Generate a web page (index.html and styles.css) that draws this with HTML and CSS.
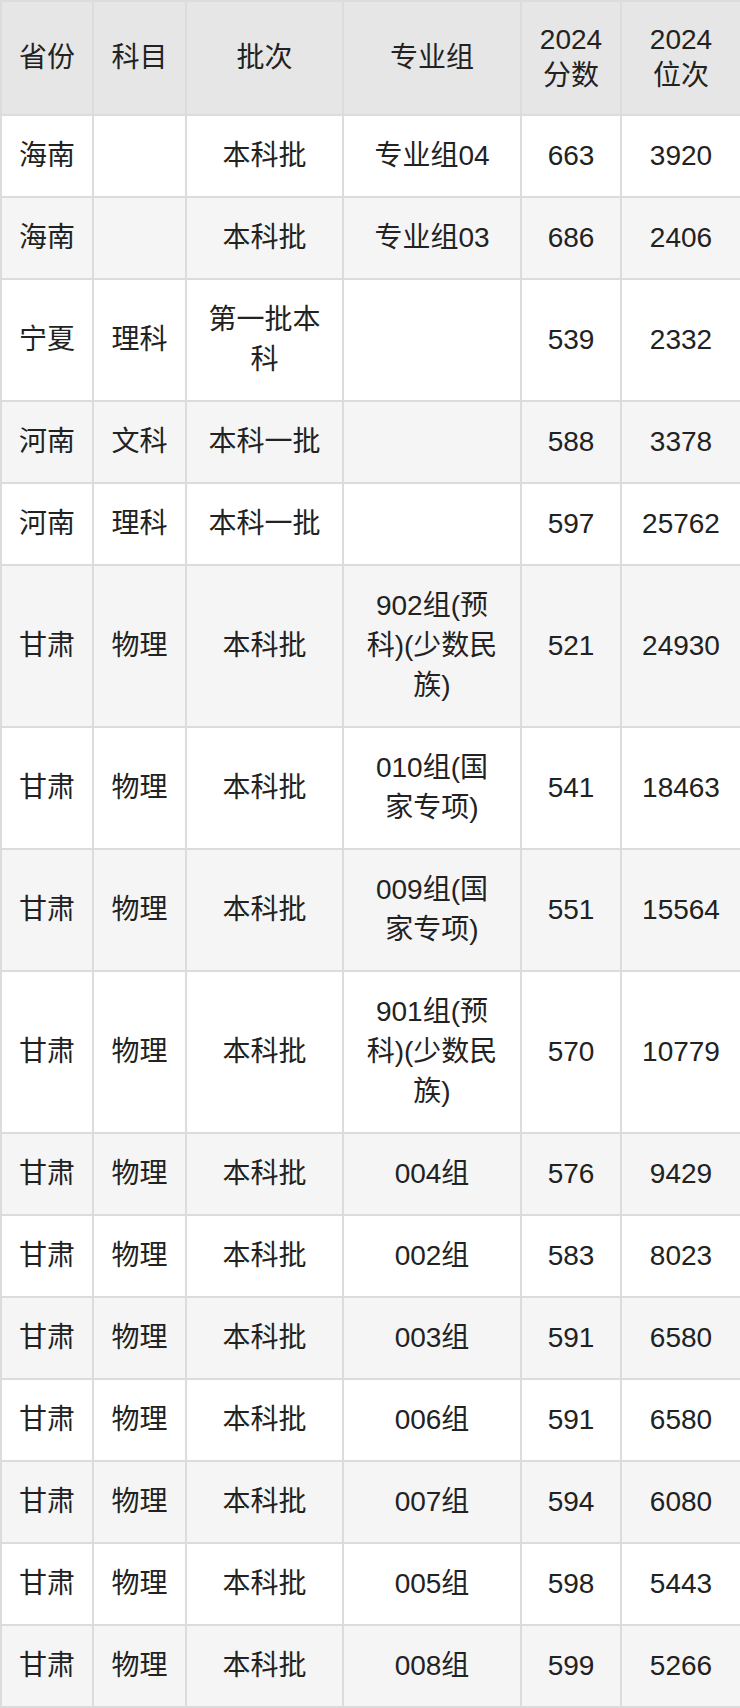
FILE: index.html
```html
<!DOCTYPE html>
<html lang="zh-CN">
<head>
<meta charset="utf-8">
<title>录取分数</title>
<link rel="stylesheet" href="styles.css">
</head>
<body>
<table class="score-table">
  <colgroup>
    <col class="c1"><col class="c2"><col class="c3"><col class="c4"><col class="c5"><col class="c6">
  </colgroup>
  <thead>
    <tr><th>省份</th><th>科目</th><th>批次</th><th>专业组</th><th>2024<br>分数</th><th>2024<br>位次</th></tr>
  </thead>
  <tbody>
    <tr><td>海南</td><td></td><td>本科批</td><td>专业组04</td><td>663</td><td>3920</td></tr>
    <tr><td>海南</td><td></td><td>本科批</td><td>专业组03</td><td>686</td><td>2406</td></tr>
    <tr><td>宁夏</td><td>理科</td><td>第一批本科</td><td></td><td>539</td><td>2332</td></tr>
    <tr><td>河南</td><td>文科</td><td>本科一批</td><td></td><td>588</td><td>3378</td></tr>
    <tr><td>河南</td><td>理科</td><td>本科一批</td><td></td><td>597</td><td>25762</td></tr>
    <tr><td>甘肃</td><td>物理</td><td>本科批</td><td>902组(预科)(少数民族)</td><td>521</td><td>24930</td></tr>
    <tr><td>甘肃</td><td>物理</td><td>本科批</td><td>010组(国家专项)</td><td>541</td><td>18463</td></tr>
    <tr><td>甘肃</td><td>物理</td><td>本科批</td><td>009组(国家专项)</td><td>551</td><td>15564</td></tr>
    <tr><td>甘肃</td><td>物理</td><td>本科批</td><td>901组(预科)(少数民族)</td><td>570</td><td>10779</td></tr>
    <tr><td>甘肃</td><td>物理</td><td>本科批</td><td>004组</td><td>576</td><td>9429</td></tr>
    <tr><td>甘肃</td><td>物理</td><td>本科批</td><td>002组</td><td>583</td><td>8023</td></tr>
    <tr><td>甘肃</td><td>物理</td><td>本科批</td><td>003组</td><td>591</td><td>6580</td></tr>
    <tr><td>甘肃</td><td>物理</td><td>本科批</td><td>006组</td><td>591</td><td>6580</td></tr>
    <tr><td>甘肃</td><td>物理</td><td>本科批</td><td>007组</td><td>594</td><td>6080</td></tr>
    <tr><td>甘肃</td><td>物理</td><td>本科批</td><td>005组</td><td>598</td><td>5443</td></tr>
    <tr><td>甘肃</td><td>物理</td><td>本科批</td><td>008组</td><td>599</td><td>5266</td></tr>
  </tbody>
</table>
</body>
</html>
```
FILE: styles.css
```css
html, body {
  margin: 0;
  padding: 0;
  background: #ffffff;
}
body {
  font-family: "Liberation Sans", "Noto Sans CJK SC", sans-serif;
  color: #222222;
}
.score-table {
  width: 740px;
  table-layout: fixed;
  border-collapse: collapse;
  border: 2px solid #dcdcdc;
  font-size: 28px;
}
.c1 { width: 92px; }
.c2 { width: 93px; }
.c3 { width: 157px; }
.c4 { width: 178px; }
.c5 { width: 100px; }
.c6 { width: 120px; }
.score-table th,
.score-table td {
  border: 2px solid #dcdcdc;
  text-align: center;
  vertical-align: middle;
  padding: 20px 4px;
  line-height: 40px;
  font-weight: normal;
  white-space: nowrap;
}
.score-table td:nth-child(3),
.score-table td:nth-child(4) {
  padding-left: 20px;
  padding-right: 20px;
  white-space: normal;
}
.score-table th {
  background: #e6e6e6;
  line-height: 36px;
}
.score-table tbody tr:nth-child(even) td {
  background: #f5f5f5;
}
```
